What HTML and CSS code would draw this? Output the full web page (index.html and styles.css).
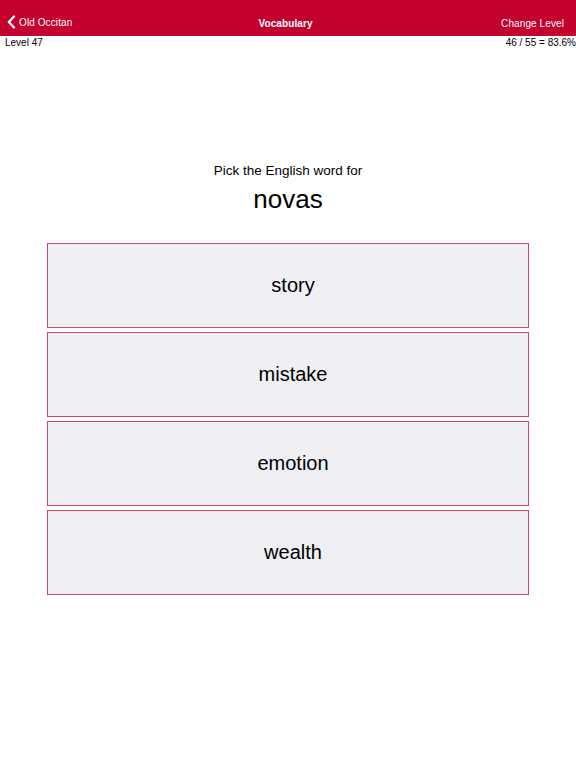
FILE: index.html
```html
<!DOCTYPE html>
<html>
<head>
<meta charset="utf-8">
<link rel="stylesheet" href="styles.css">
</head>
<body>
<div class="navbar">
  <div class="nav-left">
    <svg class="chev" width="9" height="14" viewBox="0 0 9 14"><path d="M7 1.5 L1.8 7 L7 12.5" fill="none" stroke="#fff" stroke-width="2.3" stroke-linecap="round" stroke-linejoin="round"/></svg>
    <span>Old Occitan</span>
  </div>
  <div class="nav-title">Vocabulary</div>
  <div class="nav-right">Change Level</div>
</div>
<div class="status">
  <span>Level 47</span>
  <span>46 / 55 = 83.6%</span>
</div>
<div class="prompt">
  <div class="prompt-line">Pick the English word for</div>
  <div class="word">novas</div>
</div>
<div class="options">
  <div class="option">story</div>
  <div class="option">mistake</div>
  <div class="option">emotion</div>
  <div class="option">wealth</div>
</div>
</body>
</html>
```
FILE: styles.css
```css
html, body {
  margin: 0;
  padding: 0;
  background: #ffffff;
  font-family: "Liberation Sans", Arial, sans-serif;
  color: #000;
}
.navbar {
  height: 36px;
  background: #c4002f;
  color: #fff;
  display: grid;
  grid-template-columns: 1fr auto 1fr;
  align-items: end;
  padding: 0 12px 7px 7px;
  box-sizing: border-box;
  font-size: 10px;
  letter-spacing: 0.1px;
}
.nav-left {
  display: flex;
  align-items: center;
  gap: 3px;
}
.chev { display: block; }
.nav-title {
  font-weight: bold;
  text-align: center;
}
.nav-right { text-align: right; }
.status {
  display: flex;
  justify-content: space-between;
  padding: 0 0 0 5px;
  font-size: 10px;
  height: 13px;
  line-height: 13px;
}
.prompt {
  margin-top: 113px;
  text-align: center;
}
.prompt-line {
  font-size: 13.5px;
  line-height: 18px;
}
.word {
  font-size: 26px;
  line-height: 30px;
  margin-top: 4px;
}
.options {
  margin: 29px 0 0 47px;
  width: 482px;
  display: flex;
  flex-direction: column;
  gap: 4px;
}
.option {
  height: 85px;
  box-sizing: border-box;
  border: 1px solid #d4466a;
  background: #efeff4;
  display: flex;
  align-items: center;
  justify-content: center;
  padding-left: 10px;
  font-size: 20px;
}
```
